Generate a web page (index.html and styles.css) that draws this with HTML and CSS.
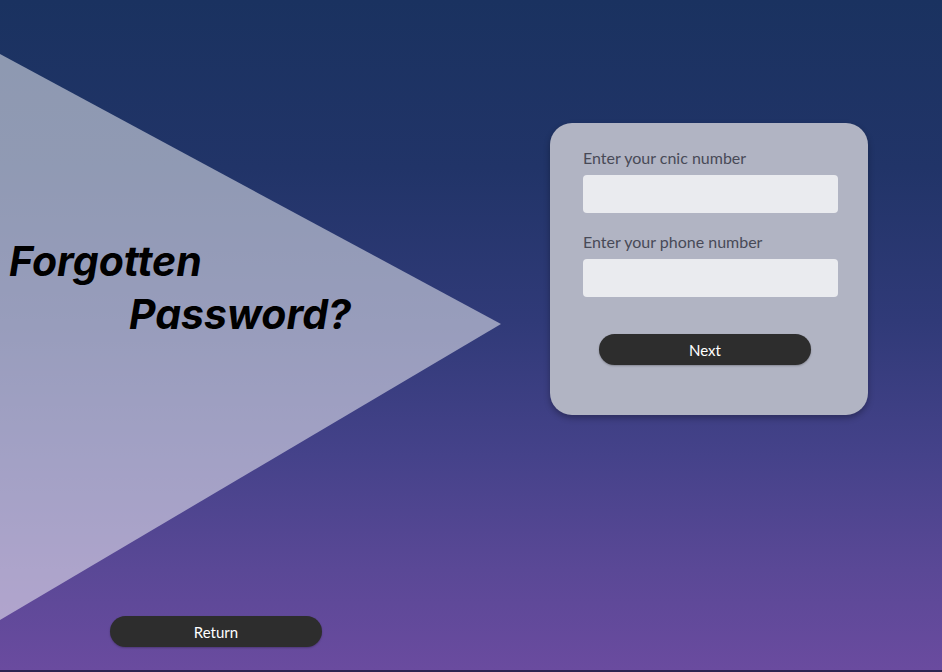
FILE: index.html
```html
<!DOCTYPE html>
<html lang="en">
<head>
<meta charset="utf-8">
<title>Forgotten Password</title>
<link rel="stylesheet" href="styles.css">
</head>
<body>
<main class="page">
  <section class="left">
    <h1 class="title">
      <span class="line1">Forgotten</span>
      <span class="line2">Password?</span>
    </h1>
    <button class="pill return-btn" type="button">Return</button>
  </section>
  <section class="right">
    <form class="card">
      <label class="label" for="cnic">Enter your cnic number</label>
      <input class="field" id="cnic" type="text">
      <label class="label label2" for="phone">Enter your phone number</label>
      <input class="field" id="phone" type="text">
      <button class="pill next-btn" type="button">Next</button>
    </form>
  </section>
</main>
</body>
</html>
```

FILE: styles.css
```css
html, body {
  margin: 0;
  padding: 0;
}
body {
  width: 942px;
  height: 672px;
  overflow: hidden;
  font-family: "Lato", "Noto Sans", sans-serif;
}
.page {
  position: relative;
  box-sizing: border-box;
  width: 942px;
  height: 672px;
  display: flex;
  background: linear-gradient(180deg, #1a3260 0%, #213468 25%, #303a78 48%, #45428a 68%, #5a4896 85%, #6a4b9f 100%);
  border-bottom: 2px solid #2e2450;
  overflow: hidden;
}
.page::before {
  content: "";
  position: absolute;
  left: 0;
  top: 0;
  width: 502px;
  height: 672px;
  background: rgba(255, 255, 255, 0.5);
  clip-path: polygon(0 54px, 501px 324px, 0 620px);
}
.left {
  position: relative;
  width: 550px;
  display: flex;
  flex-direction: column;
  align-items: flex-start;
}
.title {
  margin: 235px 0 0 9px;
  font-family: "Inter", "Liberation Sans", sans-serif;
  font-style: italic;
  font-weight: 700;
  font-size: 41px;
  line-height: 53px;
  color: #000;
  display: flex;
  flex-direction: column;
  letter-spacing: 0;
}
.line2 {
  padding-left: 120px;
}
.pill {
  border: none;
  border-radius: 16px;
  background: #2d2d2d;
  color: #fff;
  font-family: "Lato", "Noto Sans", sans-serif;
  font-size: 15px;
  height: 31px;
  width: 212px;
  padding: 0;
  cursor: pointer;
  box-shadow: 0 1px 2px rgba(0,0,0,0.25);
}
.return-btn {
  margin: auto 0 23px 110px;
}
.right {
  position: relative;
}
.card {
  box-sizing: border-box;
  margin-top: 123px;
  width: 318px;
  height: 292px;
  border-radius: 22px;
  background: #b1b4c3;
  box-shadow: 0 3px 6px rgba(0,0,0,0.3);
  padding: 25px 30px 0 33px;
  display: flex;
  flex-direction: column;
  align-items: flex-start;
}
.label {
  font-size: 16px;
  line-height: 20px;
  color: #484a57;
  margin-bottom: 7px;
}
.label2 {
  margin-bottom: 7px;
}
.field {
  box-sizing: border-box;
  width: 255px;
  height: 38px;
  border: none;
  border-radius: 4px;
  background: #eaebef;
  margin: 0 0 19px 0;
  padding: 0 10px;
  outline: none;
}
.next-btn {
  margin: 18px 0 0 16px;
}
```
